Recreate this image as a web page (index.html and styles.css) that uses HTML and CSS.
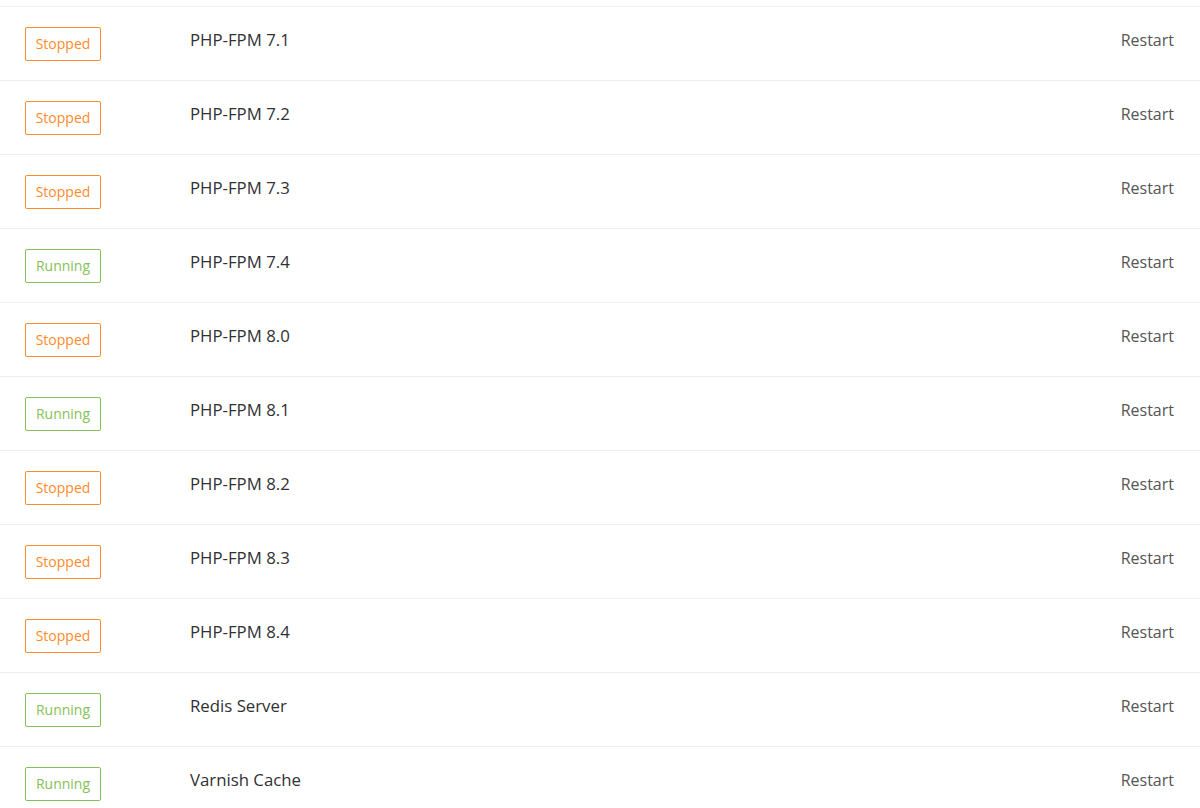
FILE: index.html
```html
<!DOCTYPE html>
<html>
<head>
<meta charset="utf-8">
<link rel="stylesheet" href="styles.css">
</head>
<body>
<div class="list">
  <div class="row"><div class="status"><span class="badge stopped">Stopped</span></div><div class="name">PHP-FPM 7.1</div><div class="action">Restart</div></div>
  <div class="row"><div class="status"><span class="badge stopped">Stopped</span></div><div class="name">PHP-FPM 7.2</div><div class="action">Restart</div></div>
  <div class="row"><div class="status"><span class="badge stopped">Stopped</span></div><div class="name">PHP-FPM 7.3</div><div class="action">Restart</div></div>
  <div class="row"><div class="status"><span class="badge running">Running</span></div><div class="name">PHP-FPM 7.4</div><div class="action">Restart</div></div>
  <div class="row"><div class="status"><span class="badge stopped">Stopped</span></div><div class="name">PHP-FPM 8.0</div><div class="action">Restart</div></div>
  <div class="row"><div class="status"><span class="badge running">Running</span></div><div class="name">PHP-FPM 8.1</div><div class="action">Restart</div></div>
  <div class="row"><div class="status"><span class="badge stopped">Stopped</span></div><div class="name">PHP-FPM 8.2</div><div class="action">Restart</div></div>
  <div class="row"><div class="status"><span class="badge stopped">Stopped</span></div><div class="name">PHP-FPM 8.3</div><div class="action">Restart</div></div>
  <div class="row"><div class="status"><span class="badge stopped">Stopped</span></div><div class="name">PHP-FPM 8.4</div><div class="action">Restart</div></div>
  <div class="row"><div class="status"><span class="badge running">Running</span></div><div class="name">Redis Server</div><div class="action">Restart</div></div>
  <div class="row"><div class="status"><span class="badge running">Running</span></div><div class="name">Varnish Cache</div><div class="action">Restart</div></div>
</div>
</body>
</html>
```

FILE: styles.css
```css
html, body {
  margin: 0;
  padding: 0;
  background: #ffffff;
  font-family: "Open Sans", "Noto Sans", sans-serif;
  color: #333333;
  overflow: hidden;
}

.list {
  padding-top: 6px;
}

.row {
  display: flex;
  align-items: center;
  height: 73px;
  border-top: 1px solid #eeeeee;
  padding: 0 26px 0 25px;
}

.status {
  width: 165px;
  flex: none;
}

.badge {
  display: inline-flex;
  align-items: center;
  justify-content: center;
  box-sizing: border-box;
  width: 76px;
  height: 34px;
  border: 1px solid;
  border-radius: 2px;
  font-size: 14px;
}

.badge.stopped {
  color: #ff8a2b;
  border-color: #ff8a2b;
}

.badge.running {
  color: #86c157;
  border-color: #86c157;
}

.name {
  flex: 1;
  font-size: 16.8px;
  color: #303133;
  margin-bottom: 8px;
}

.action {
  font-size: 16px;
  color: #555555;
  margin-bottom: 8px;
}
```
